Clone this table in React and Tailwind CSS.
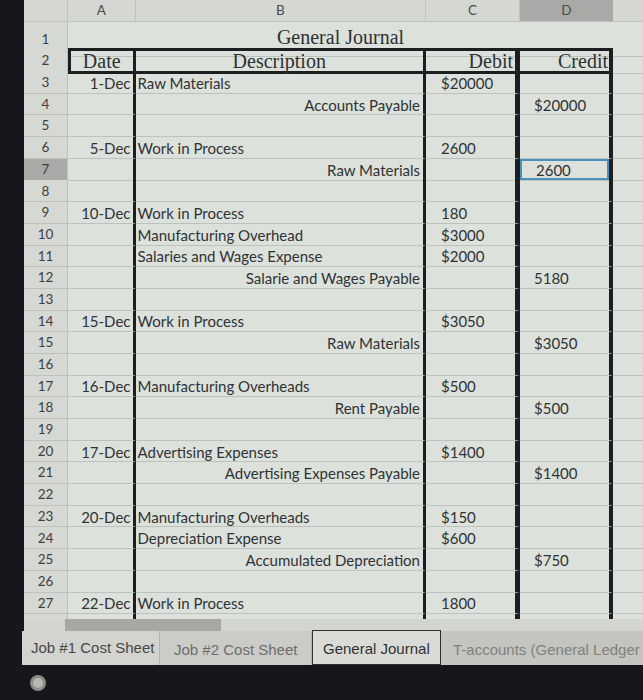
const rows = [
  { n: 3, a: "1-Dec", b: "Raw Materials", c: "$20000" },
  { n: 4, b: "Accounts Payable", right: true, d: "$20000" },
  { n: 5 },
  { n: 6, a: "5-Dec", b: "Work in Process", c: "2600" },
  { n: 7, b: "Raw Materials", right: true, d: "2600", sel: true },
  { n: 8 },
  { n: 9, a: "10-Dec", b: "Work in Process", c: "180" },
  { n: 10, b: "Manufacturing Overhead", c: "$3000" },
  { n: 11, b: "Salaries and Wages Expense", c: "$2000" },
  { n: 12, b: "Salarie and Wages Payable", right: true, d: "5180" },
  { n: 13 },
  { n: 14, a: "15-Dec", b: "Work in Process", c: "$3050" },
  { n: 15, b: "Raw Materials", right: true, d: "$3050" },
  { n: 16 },
  { n: 17, a: "16-Dec", b: "Manufacturing Overheads", c: "$500" },
  { n: 18, b: "Rent Payable", right: true, d: "$500" },
  { n: 19 },
  { n: 20, a: "17-Dec", b: "Advertising Expenses", c: "$1400" },
  { n: 21, b: "Advertising Expenses Payable", right: true, d: "$1400" },
  { n: 22 },
  { n: 23, a: "20-Dec", b: "Manufacturing Overheads", c: "$150" },
  { n: 24, b: "Depreciation Expense", c: "$600" },
  { n: 25, b: "Accumulated Depreciation", right: true, d: "$750" },
  { n: 26 },
  { n: 27, a: "22-Dec", b: "Work in Process", c: "1800" },
];

const grid = "grid grid-cols-[44px_67.5px_290.5px_94px_93px_1fr]";
const line = "border-b border-[#bcc2be]";

function DataRow({ r }) {
  return (
    <div className={`${grid} h-[21.7px] text-[15px] text-[#2f3334] leading-none`}>
      <div className={`${line} border-r border-r-[#bcc2be] flex items-center justify-center pt-[1px] text-[13.5px] text-[#3d4040] ${r.sel ? "bg-[#a9aaa7]" : "bg-[#d6d8d4]"}`}>
        {r.n}
      </div>
      <div className={`${line} border-r-[3.5px] border-r-[#1d1e20] flex items-center justify-end pt-[2px] pr-[2px] whitespace-nowrap`}>
        {r.a}
      </div>
      <div className={`${line} border-r-[3.5px] border-r-[#1d1e20] flex items-center pt-[2px] whitespace-nowrap ${r.right ? "justify-end pr-[3px]" : "pl-[2px]"}`}>
        {r.b}
      </div>
      <div className={`${line} border-r-[5px] border-r-[#1d1e20] flex items-center pt-[2px] pl-[15px]`}>
        {r.c}
      </div>
      <div className={`${line} border-r-[4px] border-r-[#1d1e20] flex items-stretch`}>
        <div className={`flex-1 flex items-center pt-[2px] pl-[14px] ${r.sel ? "border-2 border-[#4b8fbf]" : ""}`}>
          {r.d}
        </div>
      </div>
      <div className={`${line}`} />
    </div>
  );
}

export default function App() {
  return (
    <div className="w-[643px] h-[700px] bg-[#16171d] overflow-hidden font-['Lato','Liberation_Sans',sans-serif]">
      <div className="ml-[24px] bg-[#dde1dc]">
        {/* column letters */}
        <div className={`${grid} h-[22px] bg-[#d5d7d3] text-[13.5px] text-[#4a4c4c] border-b border-[#bcc2be]`}>
          <div className="border-r border-[#bcc2be]" />
          <div className="border-r border-[#bcc2be] flex items-center justify-center">A</div>
          <div className="border-r border-[#bcc2be] flex items-center justify-center">B</div>
          <div className="border-r border-[#bcc2be] flex items-center justify-center">C</div>
          <div className="bg-[#a9aaa7] flex items-center justify-center">D</div>
          <div />
        </div>

        {/* row 1 */}
        <div className={`${grid} h-[26px]`}>
          <div className={`${line} border-r border-r-[#bcc2be] bg-[#d6d8d4] flex items-center justify-center text-[13.5px] text-[#3d4040]`}>1</div>
          <div className={`${line} col-span-4 flex items-center justify-center font-['Liberation_Serif',serif] text-[20px] text-[#2e3132] pb-[4px]`}>
            General Journal
          </div>
          <div className={line} />
        </div>

        {/* row 2 */}
        <div className={`${grid} h-[24px] font-['Liberation_Serif',serif] text-[20px] text-[#2e3132] leading-none`}>
          <div className={`${line} border-r border-r-[#bcc2be] bg-[#d6d8d4] flex items-center justify-center font-['Lato',sans-serif] text-[13.5px] text-[#3d4040]`}>2</div>
          <div className="border-y-[3px] border-l-[3px] border-r-[3.5px] border-[#1d1e20] flex items-center justify-center">Date</div>
          <div className="border-y-[3px] border-r-[3.5px] border-[#1d1e20] flex items-center justify-center">Description</div>
          <div className="border-y-[3px] border-r-[5px] border-[#1d1e20] flex items-center justify-end pr-[2px]">Debit</div>
          <div className="border-y-[3px] border-r-[4px] border-[#1d1e20] flex items-center justify-end pr-[1px]">Credit</div>
          <div className={line} />
        </div>

        {rows.map((r) => (
          <DataRow key={r.n} r={r} />
        ))}

        {/* cut-off row 28 */}
        <div className={`${grid} h-[5px]`}>
          <div className="bg-[#d6d8d4] border-r border-[#bcc2be]" />
          <div className="border-r-[3.5px] border-[#1d1e20]" />
          <div className="border-r-[3.5px] border-[#1d1e20]" />
          <div className="border-r-[5px] border-[#1d1e20]" />
          <div className="border-r-[4px] border-[#1d1e20]" />
          <div />
        </div>

        {/* horizontal scrollbar */}
        <div className="h-[12px] bg-[#d3d5d1] flex">
          <div className="w-[41px]" />
          <div className="w-[156px] bg-[#a7a8a4]" />
        </div>
      </div>

      {/* sheet tabs */}
      <div className="ml-[22px] h-[34px] bg-[#c9cac6] flex items-stretch font-['Liberation_Sans',sans-serif] text-[15px] whitespace-nowrap">
        <div className="w-[138px] bg-[#d3d4d0] border-r border-[#b3b4b0] flex items-center pl-[9px] text-[#474846]">
          Job #1 Cost Sheet
        </div>
        <div className="w-[152px] bg-[#cbccc8] border-r border-[#b3b4b0] flex items-center pl-[14px] pt-[4px] text-[#6b6c69]">
          Job #2 Cost Sheet
        </div>
        <div className="w-[129px] bg-[#dadbd7] border-[1.5px] border-[#2e2f31] -mt-[1px] flex items-center pl-[10px] pt-[3px] text-[#2f3030]">
          General Journal
        </div>
        <div className="flex-1 bg-[#c4c5c1] flex items-center pl-[12px] pt-[5px] text-[#80817e] overflow-hidden">
          T-accounts (General Ledger
        </div>
      </div>

      {/* screen bezel */}
      <div className="h-[36px] flex items-center pl-[30px]">
        <div className="w-[16px] h-[16px] rounded-full bg-[#b9b8b1] border-[3px] border-[#8c8c88]" />
      </div>
    </div>
  );
}
